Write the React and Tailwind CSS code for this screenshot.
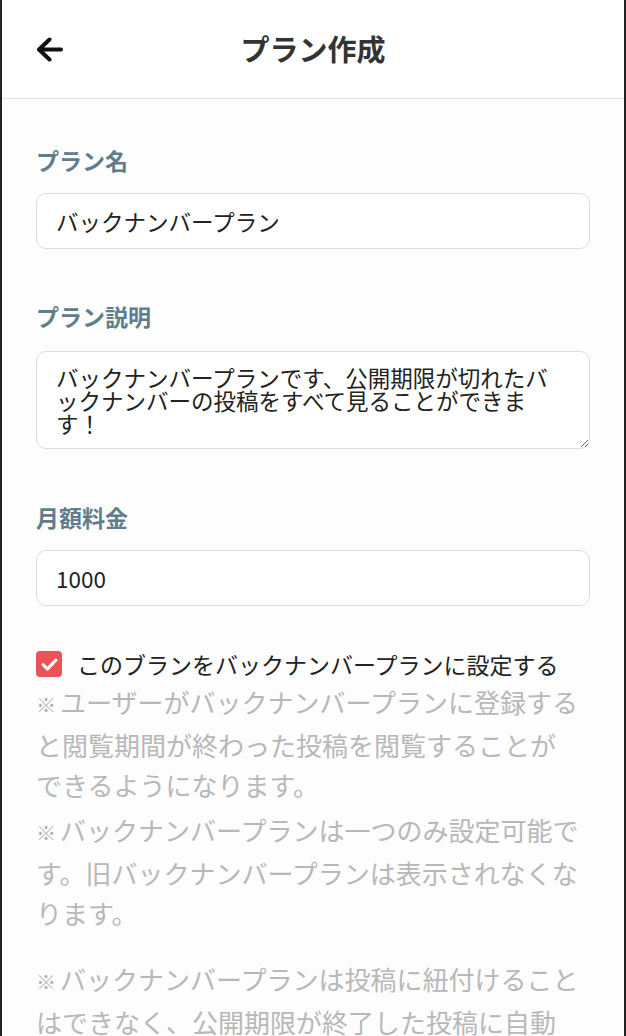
import React from "react";

const FONT = { fontFamily: '"Noto Sans CJK JP", "Noto Sans", sans-serif' };

function BackArrow() {
  return (
    <svg width="27" height="25" viewBox="0 0 27 25" fill="none">
      <path
        d="M25 12.5H3M13.5 2.5L3 12.5L13.5 22.5"
        stroke="#111"
        strokeWidth="4"
        strokeLinecap="round"
        strokeLinejoin="round"
      />
    </svg>
  );
}

function Label({ children }) {
  return (
    <div className="text-[23px] leading-[24px] font-bold text-[#607d8b]">{children}</div>
  );
}

function Mark() {
  return <span className="text-[20px] font-bold mr-[4px] text-[#b0b0b0]">※</span>;
}

export default function App() {
  return (
    <div
      className="w-full min-h-screen bg-white border-x-2 border-[#222] overflow-hidden"
      style={FONT}
    >
      <header className="h-[99px] border-b border-[#e6e6e6] px-[34px] flex items-center relative">
        <button className="flex items-center">
          <BackArrow />
        </button>
        <h1 className="absolute left-0 right-0 top-[26px] leading-[44px] text-center text-[29px] font-bold text-[#333] pointer-events-none">
          プラン作成
        </h1>
      </header>

      <main className="px-[34px] pt-[49px] bg-[#fdfdfd]">
        <Label>プラン名</Label>
        <input
          className="mt-[21px] w-full h-[56px] rounded-[10px] border border-[#dcdcdc] bg-white px-[19px] text-[22.5px] text-[#222] outline-none"
          style={FONT}
          defaultValue="バックナンバープラン"
        />

        <div className="mt-[55px]">
          <Label>プラン説明</Label>
        </div>
        <textarea
          className="mt-[23px] block w-full h-[98px] rounded-[10px] border border-[#dcdcdc] bg-white px-[19px] pt-[14px] text-[22.5px] leading-[23px] text-[#222] outline-none"
          style={FONT}
          defaultValue="バックナンバープランです、公開期限が切れたバックナンバーの投稿をすべて見ることができます！"
        />

        <div className="mt-[56px]">
          <Label>月額料金</Label>
        </div>
        <input
          className="mt-[21px] w-full h-[56px] rounded-[10px] border border-[#dcdcdc] bg-white px-[19px] text-[22.5px] text-[#222] outline-none"
          style={FONT}
          defaultValue="1000"
        />

        <label className="mt-[44px] h-[28px] flex items-center gap-[15px]">
          <span className="w-[26px] h-[26px] rounded-[4px] bg-[#ec5358] flex items-center justify-center shrink-0">
            <svg width="17" height="13" viewBox="0 0 17 13" fill="none">
              <path
                d="M2.2 6.8L6.5 11L14.8 2.2"
                stroke="white"
                strokeWidth="3.2"
                strokeLinecap="round"
                strokeLinejoin="round"
              />
            </svg>
          </span>
          <span className="text-[23px] leading-[28px] text-[#222]">
            このブランをバックナンバープランに設定する
          </span>
        </label>

        <div className="mt-[4px] text-[26px] leading-[40px] text-[#b8b8b8] whitespace-nowrap">
          <p>
            <Mark />
            ユーザーがバックナンバープランに登録する
            <br />
            と閲覧期間が終わった投稿を閲覧することが
            <br />
            できるようになります。
          </p>
          <p className="mt-[5px]">
            <Mark />
            バックナンバープランは一つのみ設定可能で
            <br />
            す。旧バックナンバープランは表示されなくな
            <br />
            ります。
          </p>
          <p className="mt-[26px]">
            <Mark />
            バックナンバープランは投稿に紐付けること
            <br />
            はできなく、公開期限が終了した投稿に自動
          </p>
        </div>
      </main>
    </div>
  );
}
